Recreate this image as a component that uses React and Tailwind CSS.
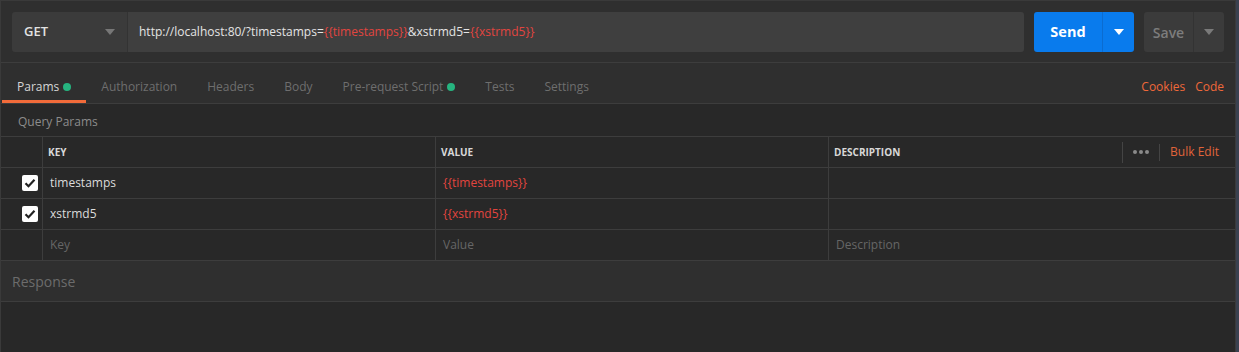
import React from "react";

const font = { fontFamily: '"Open Sans", "Noto Sans", sans-serif' };

const Caret = ({ className }) => (
  <svg width="10" height="6" viewBox="0 0 10 6" className={className}>
    <path d="M0 0h10L5 6z" fill="currentColor" />
  </svg>
);

const Check = () => (
  <div className="w-[16px] h-[16px] rounded-[2px] bg-white flex items-center justify-center">
    <svg width="12" height="10" viewBox="0 0 12 10">
      <path d="M1.5 5.2l3 3L10.5 1.8" fill="none" stroke="#222" strokeWidth="2.2" />
    </svg>
  </div>
);

const tabs = [
  { name: "Params", dot: true, active: true },
  { name: "Authorization" },
  { name: "Headers" },
  { name: "Body" },
  { name: "Pre-request Script", dot: true },
  { name: "Tests" },
  { name: "Settings" },
];

const rows = [
  { key: "timestamps", value: "{{timestamps}}" },
  { key: "xstrmd5", value: "{{xstrmd5}}" },
];

const Red = ({ children }) => <span className="text-[#e2453f]">{children}</span>;

export default function App() {
  return (
    <div className="w-[1239px] h-[352px] flex bg-[#282828] overflow-hidden" style={font}>
      <div className="flex-1 flex flex-col border-l border-r border-t border-[#3a3a3a]">
        {/* request bar */}
        <div className="h-[62px] bg-[#2f2f2f] border-b border-[#3d3d3d] pl-[11px] pr-[10px] pt-[11px] flex items-start">
          <div className="flex h-[40px] w-[1012px] rounded-[3px] overflow-hidden">
            <div className="w-[116px] bg-[#3b3b3b] border-r border-[#333] flex items-center justify-between pl-[12px] pr-[12px]">
              <span className="text-[13px] font-semibold text-[#e2e2e2]">GET</span>
              <Caret className="text-[#777]" />
            </div>
            <div className="flex-1 bg-[#3f3f3f] flex items-center pl-[11px] text-[12px] text-[#e4e4e4]">
              http://localhost:80/?timestamps=<Red>{"{{timestamps}}"}</Red>&amp;xstrmd5=<Red>{"{{xstrmd5}}"}</Red>
            </div>
          </div>
          <div className="ml-[10px] flex h-[40px] w-[100px] rounded-[3px] overflow-hidden bg-[#097bed]">
            <div className="w-[69px] flex items-center justify-center text-[14.5px] font-bold text-white border-r border-[#0b6cd0]">
              Send
            </div>
            <div className="flex-1 flex items-center justify-center text-white">
              <Caret />
            </div>
          </div>
          <div className="ml-[10px] flex h-[40px] w-[80px] rounded-[3px] overflow-hidden bg-[#3b3b3b]">
            <div className="w-[50px] flex items-center justify-center text-[14px] font-semibold text-[#7d7d7d] border-r border-[#333]">
              Save
            </div>
            <div className="flex-1 flex items-center justify-center text-[#7a7a7a]">
              <Caret />
            </div>
          </div>
        </div>

        {/* tabs */}
        <div className="h-[41px] bg-[#2f2f2f] border-b border-[#3d3d3d] flex items-stretch pl-px pr-[11px]">
          {tabs.map((t) => (
            <div
              key={t.name}
              className={`px-[15px] flex items-center pt-[10px] border-b-[3px] text-[12px] ${
                t.active ? "border-[#f26b3a] text-[#d6d6d6]" : "border-transparent text-[#6e6e6e]"
              }`}
            >
              {t.name}
              {t.dot && <span className="ml-[4px] w-[8px] h-[8px] rounded-full bg-[#26b47f]" />}
            </div>
          ))}
          <div className="ml-auto flex items-center gap-[10px] pt-[7px] text-[12px] text-[#f0683a]">
            <span>Cookies</span>
            <span>Code</span>
          </div>
        </div>

        {/* query params label */}
        <div className="h-[33px] border-b border-[#3d3d3d] flex items-center pl-[17px] pt-[3px] text-[12px] text-[#8c8c8c]">
          Query Params
        </div>

        {/* table header */}
        <div className="h-[31px] border-b border-[#3d3d3d] flex text-[10px] font-bold text-[#d8d8d8]">
          <div className="w-[42px] border-r border-[#3d3d3d]" />
          <div className="w-[393px] border-r border-[#3d3d3d] flex items-center pl-[5px]">KEY</div>
          <div className="w-[393px] border-r border-[#3d3d3d] flex items-center pl-[5px]">VALUE</div>
          <div className="flex-1 flex items-center pl-[5px]">
            DESCRIPTION
            <div className="ml-auto flex items-center h-full">
              <div className="h-[21px] border-l border-[#444]" />
              <div className="w-[36px] flex items-center justify-center gap-[2px]">
                {[0, 1, 2].map((i) => (
                  <span key={i} className="w-[4px] h-[4px] rounded-full bg-[#8a8a8a]" />
                ))}
              </div>
              <div className="h-[17px] border-l border-[#444]" />
              <span className="pl-[10px] pr-[16px] text-[12px] font-normal text-[#e0643a]">Bulk Edit</span>
            </div>
          </div>
        </div>

        {/* rows */}
        {rows.map((r) => (
          <div key={r.key} className="h-[31px] border-b border-[#3d3d3d] flex text-[12px]">
            <div className="w-[42px] border-r border-[#3d3d3d] flex items-center justify-end pr-[4px]">
              <Check />
            </div>
            <div className="w-[393px] border-r border-[#3d3d3d] flex items-center pl-[7px] text-[#dcdcdc]">
              {r.key}
            </div>
            <div className="w-[393px] border-r border-[#3d3d3d] flex items-center pl-[7px] text-[#e2453f]">
              {r.value}
            </div>
            <div className="flex-1" />
          </div>
        ))}
        <div className="h-[31px] border-b border-[#3d3d3d] flex text-[12px] text-[#666]">
          <div className="w-[42px] border-r border-[#3d3d3d]" />
          <div className="w-[393px] border-r border-[#3d3d3d] flex items-center pl-[7px]">Key</div>
          <div className="w-[393px] border-r border-[#3d3d3d] flex items-center pl-[7px]">Value</div>
          <div className="flex-1 flex items-center pl-[7px]">Description</div>
        </div>

        {/* response */}
        <div className="h-[41px] bg-[#2f2f2f] border-b border-[#3d3d3d] flex items-center pl-[11px] text-[14px] text-[#6c6c6c]">
          Response
        </div>
        <div className="flex-1" />
      </div>
      <div className="w-[3px] bg-[#3a4150]" />
    </div>
  );
}
